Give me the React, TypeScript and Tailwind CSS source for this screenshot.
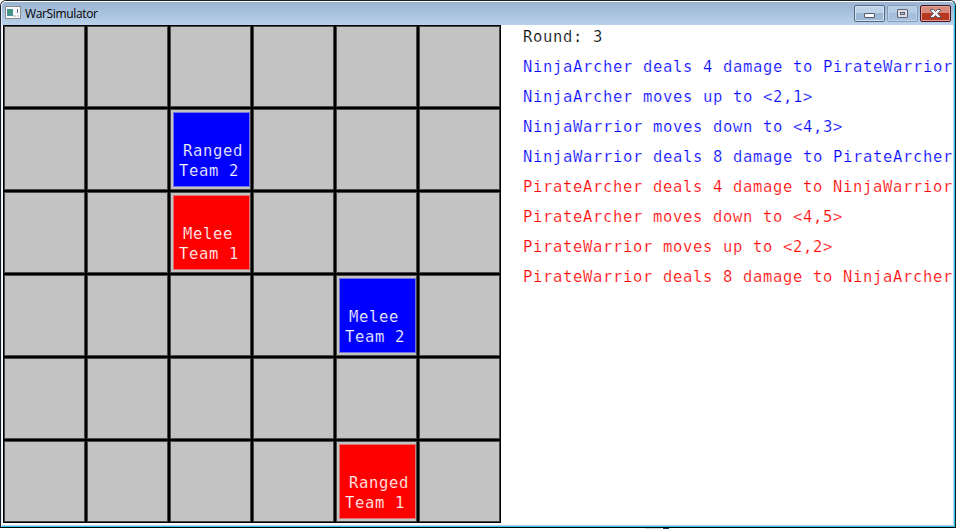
type Unit = { kind: string; team: number };

const units: Record<string, Unit> = {
  '2,1': { kind: 'Ranged', team: 2 },
  '2,2': { kind: 'Melee', team: 1 },
  '4,3': { kind: 'Melee', team: 2 },
  '4,5': { kind: 'Ranged', team: 1 },
};

const log = [
  { text: 'Round: 3', color: 'text-black' },
  { text: 'NinjaArcher deals 4 damage to PirateWarrior', color: 'text-[#0000ff]' },
  { text: 'NinjaArcher moves up to <2,1>', color: 'text-[#0000ff]' },
  { text: 'NinjaWarrior moves down to <4,3>', color: 'text-[#0000ff]' },
  { text: 'NinjaWarrior deals 8 damage to PirateArcher', color: 'text-[#0000ff]' },
  { text: 'PirateArcher deals 4 damage to NinjaWarrior', color: 'text-[#ff0000]' },
  { text: 'PirateArcher moves down to <4,5>', color: 'text-[#ff0000]' },
  { text: 'PirateWarrior moves up to <2,2>', color: 'text-[#ff0000]' },
  { text: 'PirateWarrior deals 8 damage to NinjaArcher', color: 'text-[#ff0000]' },
];

const mono = "font-['DejaVu_Sans_Mono','Liberation_Mono',monospace] text-[15.5px] tracking-[0.668px] whitespace-pre";

function UnitTile({ unit }: { unit: Unit }) {
  const color =
    unit.team === 1
      ? 'bg-[#ff0000] border-[#e07474] [-webkit-text-stroke:0.22px_#ff0000]'
      : 'bg-[#0000ff] border-[#7474e0] [-webkit-text-stroke:0.22px_#0000ff]';
  return (
    <div className={`ml-[2px] mt-[2px] h-[75px] w-[77px] border pl-[5px] pt-[28px] leading-5 text-white ${color} ${mono}`}>
      <div className={unit.kind === 'Ranged' ? 'pl-[4px]' : 'pl-[4px]'}>{unit.kind}</div>
      <div>{`Team ${unit.team}`}</div>
    </div>
  );
}

function Board() {
  return (
    <div className="grid h-[498px] w-[498px] shrink-0 grid-cols-6 grid-rows-6">
      {Array.from({ length: 36 }, (_, i) => {
        const unit = units[`${i % 6},${Math.floor(i / 6)}`];
        return (
          <div key={i} className="border border-black">
            <div className="h-full border border-[#484848] bg-[#c3c3c3]">{unit && <UnitTile unit={unit} />}</div>
          </div>
        );
      })}
    </div>
  );
}

function TitleBar() {
  return (
    <div className="flex h-[23px] shrink-0 items-start bg-linear-to-b from-[#9ab4d2] to-[#b9d1ea]">
      <svg className="ml-[3px] mt-[4px]" width="16" height="13" viewBox="0 0 16 13" shapeRendering="crispEdges">
        <rect width="16" height="13" fill="#8c8c8c" />
        <rect x="1" y="1" width="14" height="11" fill="#f8f8f8" />
        <rect x="2" y="3" width="6" height="7" fill="#4b8fa0" />
        <rect x="3" y="4" width="4" height="4" fill="#429a76" />
        <rect x="8" y="9" width="3" height="2" fill="#d8d8d8" />
        <rect x="12" y="3" width="1" height="4" fill="#4c6c9c" />
        <rect x="12" y="9" width="2" height="2" fill="#d0d8d8" />
      </svg>
      <span className="ml-[4px] mt-[4px] font-['Open_Sans','Noto_Sans',sans-serif] text-[12px] leading-[16px] tracking-[-0.35px] text-black">
        WarSimulator
      </span>
      <div className="ml-auto mr-[3px] mt-[3px] flex gap-[2px]">
        <svg width="31" height="17" viewBox="0 0 31 17">
          <rect x=".5" y=".5" width="30" height="16" rx="1.5" fill="#bfd3e8" stroke="#53677f" />
          <path d="M2 8h27v7H2z" fill="#9cb8d4" />
          <rect x="1.5" y="1.5" width="28" height="14" rx="1" fill="none" stroke="#d3e2f1" />
          <rect x="10.5" y="8.5" width="10" height="4" rx=".5" fill="#fff" stroke="#535666" />
        </svg>
        <svg width="31" height="17" viewBox="0 0 31 17">
          <rect x=".5" y=".5" width="30" height="16" rx="1.5" fill="#b4cce4" stroke="#879db6" />
          <path d="M2 8h27v7H2z" fill="#a5c0dc" />
          <rect x="1.5" y="1.5" width="28" height="14" rx="1" fill="none" stroke="#bfd3e8" />
          <rect x="10.5" y="4.5" width="10" height="8" rx=".5" fill="#dcdfe6" stroke="#5f6374" />
          <rect x="13.5" y="7.5" width="4" height="2" fill="#a5c0dc" stroke="#5f6374" />
        </svg>
        <svg width="31" height="17" viewBox="0 0 31 17">
          <rect x=".5" y=".5" width="30" height="16" rx="1.5" fill="#d88b7d" stroke="#431422" />
          <path d="M2 8h27v7H2z" fill="#b8371f" />
          <rect x="1.5" y="1.5" width="28" height="14" rx="1" fill="none" stroke="#e2a499" />
          <path d="M10.5 4.5h3l2 2 2-2h3v1.3l-2.8 2.7 2.8 2.7v1.3h-3l-2-2-2 2h-3v-1.3l2.8-2.7-2.8-2.7z" fill="#f3f3f5" stroke="#535666" />
        </svg>
      </div>
    </div>
  );
}

export default function App() {
  return (
    <div className="h-[529px] w-[956px] overflow-hidden bg-white">
      <div className="h-[528px] rounded-t-[6px] border border-[#1b2126] border-b-black bg-white">
        <div className="flex h-full flex-col overflow-hidden rounded-t-[5px] border border-t-white border-r-[#22c8e8] border-b-[#22c8e8] border-l-[#e4eefa]">
          <TitleBar />
          <div className="flex min-h-0 flex-1 border-r border-b border-[#b9d1ea] pl-px">
            <Board />
            <div className="ml-[22px] min-w-0 flex-1 overflow-hidden pt-[2px]">
              {log.map((line) => (
                <div key={line.text} className={`mb-[10px] leading-5 [-webkit-text-stroke:0.22px_#ffffff] ${line.color} ${mono}`}>
                  {line.text}
                </div>
              ))}
            </div>
          </div>
        </div>
      </div>
      <div className="ml-[645px] flex h-px">
        <div className="w-[16px] bg-[#dcdcdc]" />
        <div className="ml-[2px] w-[6px] bg-[#20345c]" />
      </div>
    </div>
  );
}
